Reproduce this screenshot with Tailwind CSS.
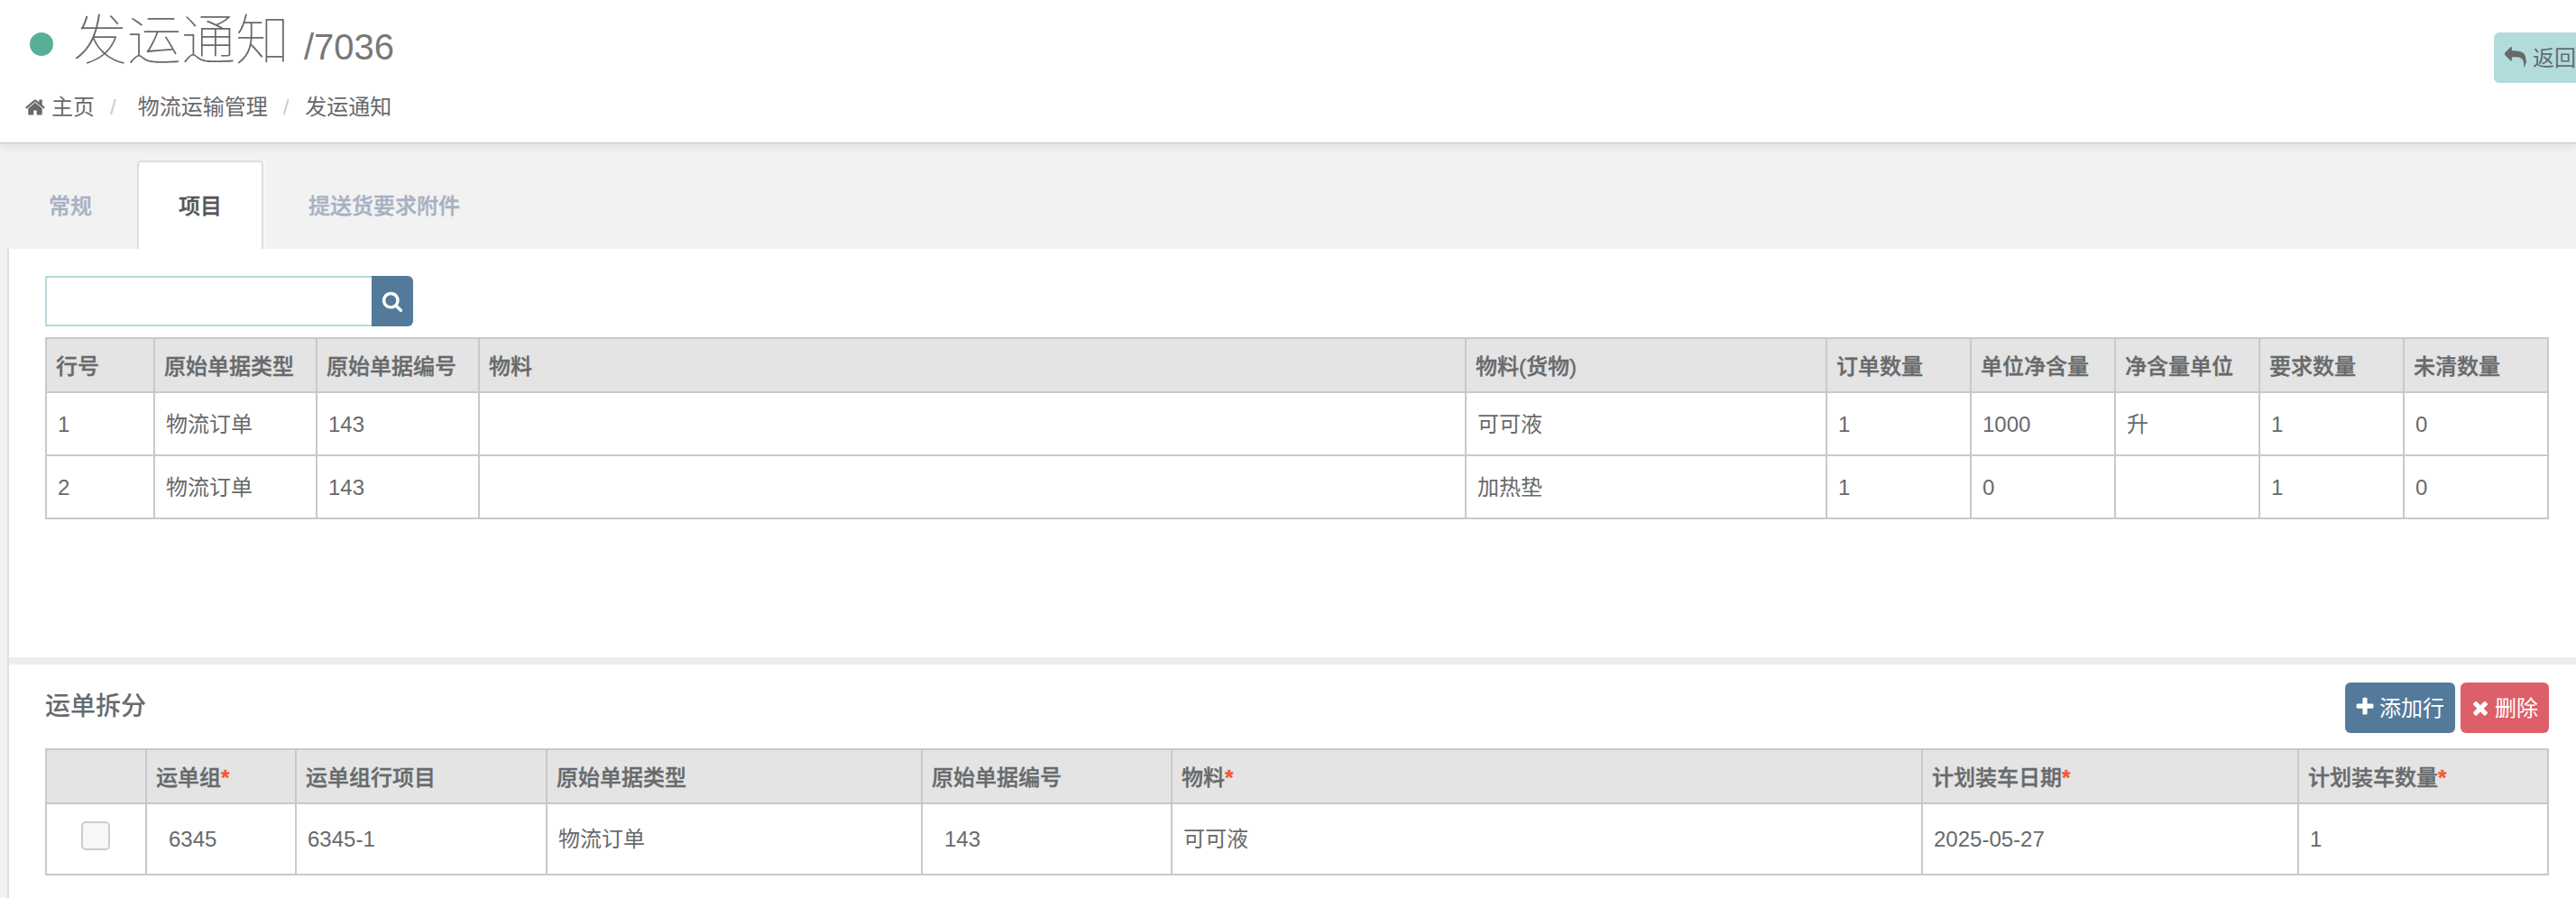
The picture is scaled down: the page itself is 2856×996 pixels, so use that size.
<!DOCTYPE html>
<html lang="zh-CN">
<head>
  <meta charset="utf-8">
  <title>发运通知</title>
  <script src="https://cdn.jsdelivr.net/npm/@tailwindcss/browser@4"></script>
</head>
<body class="h-[996px] overflow-hidden bg-[#f2f2f2] font-['Liberation_Sans','Noto_Sans_CJK_SC',sans-serif] text-2xl leading-[34px] text-[#676a6c]">

  <!-- Page heading -->
  <header class="relative flex h-[159px] justify-between border-b border-[#c6c6c6] bg-white pl-7 shadow-[0_2px_12px_rgba(0,0,0,0.1)]">
    <div class="flex flex-col">
      <div class="flex h-[92px] items-baseline pt-[2px]">
        <span class="ml-[5px] mr-[22px] mt-[3px] h-[26px] w-[26px] self-center rounded-full bg-[#56b097]"></span>
        <h1 class="text-[60px] leading-[88px] font-thin">发运通知</h1>
        <span class="ml-4 text-[40px] leading-[88px] text-[#777]">/7036</span>
      </div>
      <nav class="mt-[10px] flex h-[34px] items-center whitespace-nowrap">
        <a class="flex items-center gap-[6px]">
          <svg class="-ml-px size-6 fill-current" viewBox="0 0 1792 1792"><path d="M1472 992v480q0 26-19 45t-45 19h-384v-384h-256v384h-384q-26 0-45-19t-19-45v-480q0-1 .5-3t.5-3l575-474 575 474q1 2 1 6zm223-69l-62 74q-8 9-21 11h-3q-13 0-21-7l-692-577-692 577q-12 8-24 7-13-2-21-11l-62-74q-8-10-7-23.5t11-21.5l719-599q32-26 76-26t76 26l244 204v-195q0-14 9-23t23-9h192q14 0 23 9t9 23v408l219 182q10 8 11 21.5t-7 23.5z"/></svg>
          <span>主页</span>
        </a>
        <span class="ml-[17px] mr-6 text-[#ccc]">/</span>
        <a>物流运输管理</a>
        <span class="mx-[17px] text-[#ccc]">/</span>
        <a class="pl-px">发运通知</a>
      </nav>
    </div>
    <button class="-mr-3 mt-9 flex h-14 w-[103px] items-center gap-[7px] rounded-md bg-[#b2dbdc] pl-3 whitespace-nowrap">
      <svg class="size-6 shrink-0 fill-current" viewBox="0 0 1792 1792"><path d="M1792 1120q0 166-127 451-3 7-10.5 24t-13.5 30-13 22q-12 17-28 17-15 0-23.5-10t-8.5-25q0-9 2.5-26.5t2.5-23.5q5-68 5-123 0-112-19.5-200.5t-54-153.5-89-112-117-78-141.5-49-162.5-24.5-180-7h-224v256q0 26-19 45t-45 19-45-19l-512-512q-19-19-19-45t19-45l512-512q19-19 45-19t45 19 19 45v256h224q713 0 875 403 53 134 53 333z"/></svg>
      <span class="pt-[2px]">返回</span>
    </button>
  </header>

  <!-- Tabs -->
  <ul class="flex h-[117px] items-end pl-2 font-medium text-[#a7b1c2] [-webkit-text-stroke:0.4px]">
    <li class="flex h-[98px] w-[144px] items-center pt-1 pl-[46px]">常规</li>
    <li class="flex h-[98px] w-[140px] items-center rounded-t-[5px] border-2 border-b-0 border-[#ddd] bg-white pt-[2px] pl-11 text-[#555]">项目</li>
    <li class="flex h-[98px] items-center border-l-4 border-[#f6f6f6] pt-1 pl-[46px]">提送货要求附件</li>
  </ul>

  <main class="ml-2 h-[720px] border-l-2 border-[#ddd] bg-white">
    <!-- Items -->
    <section class="h-[453px] pl-10 pt-[30px]">
      <div class="flex h-14 w-[408px]">
        <input type="text" class="w-[362px] rounded-l-[2px] border-2 border-r-0 border-[#b1dadc] bg-white px-3 outline-none">
        <button class="flex w-[46px] items-center justify-center rounded-r-md bg-[#537a9b] text-white">
          <svg class="size-6 fill-current" viewBox="0 0 1792 1792"><path d="M1216 832q0-185-131.5-316.5T768 384 451.5 515.5 320 832t131.5 316.5T768 1280t316.5-131.5T1216 832zm512 832q0 52-38 90t-90 38q-54 0-90-38l-343-342q-179 124-399 124-143 0-273.5-55.5t-225-150-150-225T64 832t55.5-273.5 150-225 225-150T768 128t273.5 55.5 225 150 150 225T1472 832q0 220-124 399l343 343q37 37 37 90z"/></svg>
        </button>
      </div>

      <table class="mt-3 w-[2776px] table-fixed border-separate border-spacing-0 border-r-2 border-b-2 border-[#c9c9c9] text-left [&_td]:border-t-2 [&_td]:border-l-2 [&_td]:border-[#c9c9c9] [&_td]:pt-px [&_td]:pl-3 [&_th]:border-t-2 [&_th]:border-l-2 [&_th]:border-[#c9c9c9] [&_th]:pt-1 [&_th]:pl-[10px] [&_th]:font-medium [&_th]:[-webkit-text-stroke:0.4px]">
        <colgroup>
          <col class="w-[120px]"><col class="w-[180px]"><col class="w-[180px]"><col class="w-[1094px]"><col class="w-[400px]">
          <col class="w-[160px]"><col class="w-[160px]"><col class="w-[160px]"><col class="w-[160px]"><col class="w-[160px]">
        </colgroup>
        <thead>
          <tr class="h-[60px] bg-[#e4e4e4]">
            <th>行号</th>
            <th>原始单据类型</th>
            <th>原始单据编号</th>
            <th>物料</th>
            <th>物料(货物)</th>
            <th>订单数量</th>
            <th>单位净含量</th>
            <th>净含量单位</th>
            <th>要求数量</th>
            <th>未清数量</th>
          </tr>
        </thead>
        <tbody>
          <tr class="h-[70px]">
            <td>1</td>
            <td>物流订单</td>
            <td>143</td>
            <td></td>
            <td>可可液</td>
            <td>1</td>
            <td>1000</td>
            <td>升</td>
            <td>1</td>
            <td>0</td>
          </tr>
          <tr class="h-[70px]">
            <td>2</td>
            <td>物流订单</td>
            <td>143</td>
            <td></td>
            <td>加热垫</td>
            <td>1</td>
            <td>0</td>
            <td></td>
            <td>1</td>
            <td>0</td>
          </tr>
        </tbody>
      </table>
    </section>

    <!-- Waybill split -->
    <section class="border-t-8 border-[#ededed] pl-10 pt-5">
      <div class="flex h-14 w-[2776px] justify-between">
        <h2 class="pt-[9px] text-[28px] leading-[36px] font-medium">运单拆分</h2>
        <div class="flex gap-[6px] text-white">
          <button class="flex w-[122px] items-center gap-1 rounded-md bg-[#537a9b] pl-[10px] whitespace-nowrap">
            <svg class="-mt-[2px] size-6 shrink-0 fill-current" viewBox="0 0 1792 1792"><path d="M1600 736v192q0 40-28 68t-68 28h-416v416q0 40-28 68t-68 28h-192q-40 0-68-28t-28-68v-416h-416q-40 0-68-28t-28-68v-192q0-40 28-68t68-28h416v-416q0-40 28-68t68-28h192q40 0 68 28t28 68v416h416q40 0 68 28t28 68z"/></svg>
            <span class="pt-[2px]">添加行</span>
          </button>
          <button class="flex w-[98px] items-center gap-1 rounded-md bg-[#dd5f69] pl-[10px] whitespace-nowrap">
            <svg class="size-6 shrink-0 fill-current" viewBox="0 0 1792 1792"><path d="M1490 1322q0 40-28 68l-136 136q-28 28-68 28t-68-28l-294-294-294 294q-28 28-68 28t-68-28l-136-136q-28-28-28-68t28-68l294-294-294-294q-28-28-28-68t28-68l136-136q28-28 68-28t68 28l294 294 294-294q28-28 68-28t68 28l136 136q28 28 28 68t-28 68l-294 294 294 294q28 28 28 68z"/></svg>
            <span class="pt-[2px]">删除</span>
          </button>
        </div>
      </div>

      <table class="mt-[17px] w-[2776px] table-fixed border-separate border-spacing-0 border-r-2 border-b-2 border-[#c9c9c9] text-left [&_td]:border-t-2 [&_td]:border-l-2 [&_td]:border-[#c9c9c9] [&_th]:border-t-2 [&_th]:border-l-2 [&_th]:border-[#c9c9c9] [&_th]:pt-[3px] [&_th]:pl-[10px] [&_th]:font-medium [&_th]:[-webkit-text-stroke:0.4px]">
        <colgroup>
          <col class="w-[111px]"><col class="w-[166px]"><col class="w-[278px]"><col class="w-[416px]">
          <col class="w-[277px]"><col class="w-[832px]"><col class="w-[417px]"><col class="w-[277px]">
        </colgroup>
        <thead>
          <tr class="h-[60px] bg-[#e4e4e4]">
            <th></th>
            <th>运单组<span class="font-bold text-[#f1592f]">*</span></th>
            <th>运单组行项目</th>
            <th>原始单据类型</th>
            <th>原始单据编号</th>
            <th>物料<span class="font-bold text-[#f1592f]">*</span></th>
            <th>计划装车日期<span class="font-bold text-[#f1592f]">*</span></th>
            <th>计划装车数量<span class="font-bold text-[#f1592f]">*</span></th>
          </tr>
        </thead>
        <tbody>
          <tr class="h-[79px]">
            <td class="pr-[2px] pb-[7px]"><span class="mx-auto block size-8 rounded-[5px] border-2 border-[#ccc] bg-[#f7f7f7]"></span></td>
            <td class="pl-6">6345</td>
            <td class="pl-3">6345-1</td>
            <td class="pl-3">物流订单</td>
            <td class="pl-6">143</td>
            <td class="pl-3">可可液</td>
            <td class="pl-3">2025-05-27</td>
            <td class="pl-3">1</td>
          </tr>
        </tbody>
      </table>
    </section>
  </main>
</body>
</html>
